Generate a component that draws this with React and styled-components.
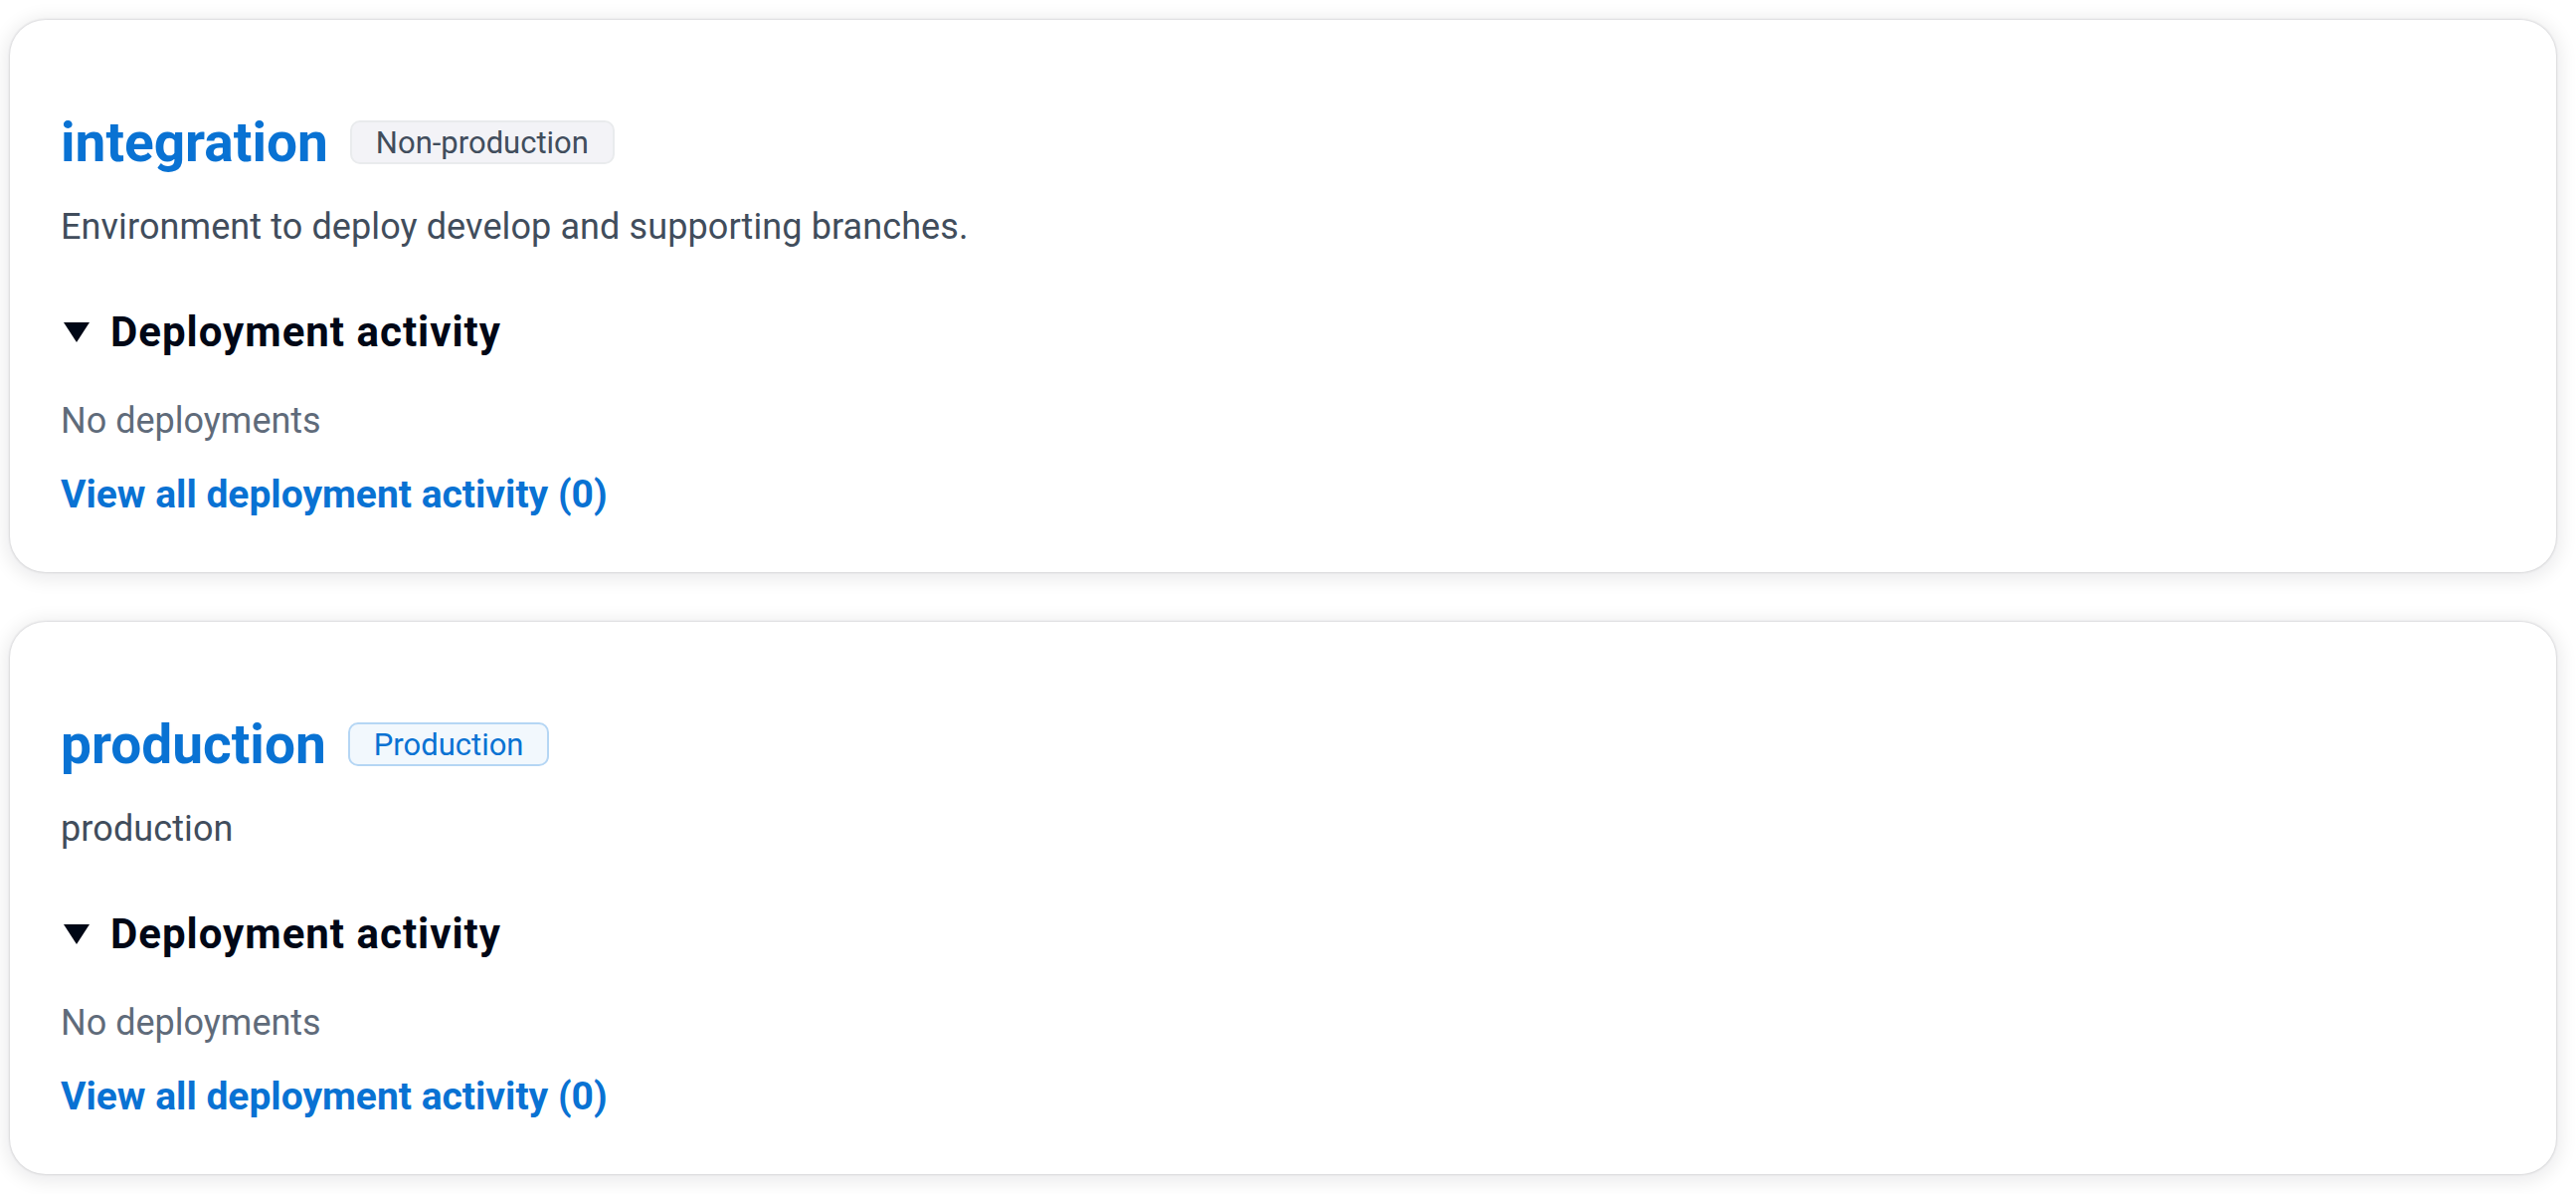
import React from "react";
import styled, { createGlobalStyle } from "styled-components";

const GlobalStyle = createGlobalStyle`
  html, body {
    margin: 0;
    padding: 0;
    background: #ffffff;
  }
  body {
    font-family: Roboto, "Open Sans", sans-serif;
    -webkit-font-smoothing: antialiased;
  }
`;

const Page = styled.div`
  display: flex;
  flex-direction: column;
  gap: 50px;
  padding: 20px 20px 20px 10px;
`;

const Card = styled.section`
  background: #ffffff;
  border-radius: 36px;
  padding: 91px 52px 54px 51px;
  box-shadow: 0 0 2px 1px rgba(0, 7, 22, 0.1),
    0 3px 18px 5px rgba(0, 7, 22, 0.08);
`;

const HeaderRow = styled.div`
  display: flex;
  align-items: center;
  gap: 22px;
  height: 64px;
`;

const Title = styled.a`
  font-size: 55px;
  line-height: 64px;
  font-weight: 700;
  color: #0972d3;
  text-decoration: none;
`;

const Badge = styled.span`
  display: inline-flex;
  align-items: center;
  box-sizing: border-box;
  height: 44px;
  padding: 0 24px;
  border-radius: 10px;
  font-size: 31px;
  border: 2px solid ${(props) => (props.prod ? "#b5d6f4" : "#e9ebed")};
  background: ${(props) => (props.prod ? "#f2f8fd" : "#f3f3f7")};
  color: ${(props) => (props.prod ? "#0972d3" : "#414d5c")};
`;

const Description = styled.p`
  margin: 29px 0 0 0;
  font-size: 36px;
  line-height: 48px;
  letter-spacing: 0.1px;
  color: #414d5c;
`;

const SectionHeader = styled.div`
  display: flex;
  align-items: center;
  gap: 18px;
  margin-top: 56px;
  height: 52px;
`;

const Caret = styled.svg`
  width: 32px;
  height: 32px;
  flex-shrink: 0;
`;

const SectionTitle = styled.h3`
  margin: 0;
  font-size: 42px;
  line-height: 52px;
  letter-spacing: 1px;
  font-weight: 700;
  color: #000716;
`;

const Empty = styled.div`
  margin-top: 39px;
  font-size: 36px;
  line-height: 48px;
  color: #5f6b7a;
`;

const ActivityLink = styled.a`
  display: block;
  margin-top: 26px;
  font-size: 39px;
  line-height: 48px;
  font-weight: 700;
  color: #0972d3;
  text-decoration: none;
`;

const environments = [
  {
    name: "integration",
    type: "Non-production",
    prod: false,
    description: "Environment to deploy develop and supporting branches.",
  },
  {
    name: "production",
    type: "Production",
    prod: true,
    description: "production",
  },
];

const EnvironmentCard = ({ env }) => (
  <Card>
    <HeaderRow>
      <Title href="#">{env.name}</Title>
      <Badge prod={env.prod}>{env.type}</Badge>
    </HeaderRow>
    <Description>{env.description}</Description>
    <SectionHeader>
      <Caret viewBox="0 0 32 32">
        <path d="M3 6 L29 6 L16 26 Z" fill="#000716" />
      </Caret>
      <SectionTitle>Deployment activity</SectionTitle>
    </SectionHeader>
    <Empty>No deployments</Empty>
    <ActivityLink href="#">View all deployment activity (0)</ActivityLink>
  </Card>
);

export default function App() {
  return (
    <>
      <GlobalStyle />
      <Page>
        {environments.map((env) => (
          <EnvironmentCard key={env.name} env={env} />
        ))}
      </Page>
    </>
  );
}
